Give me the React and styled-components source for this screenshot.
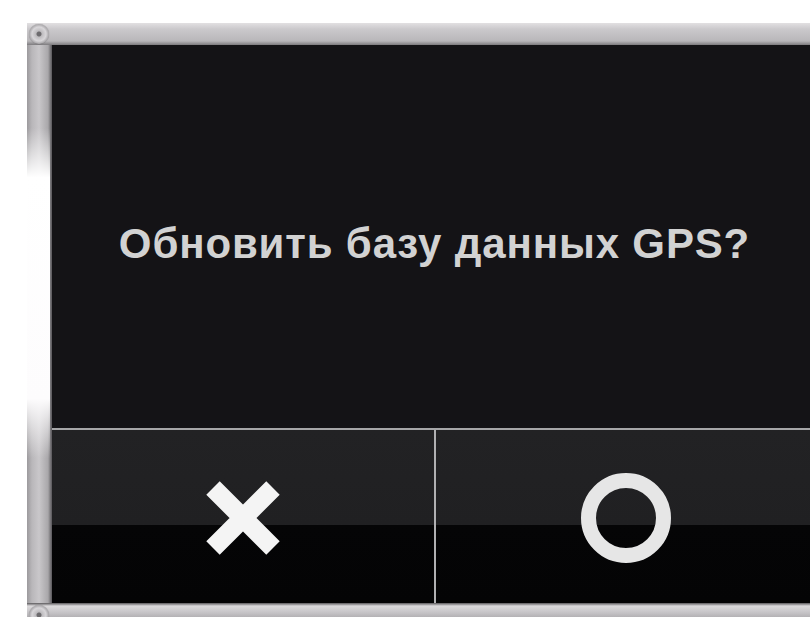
import React from 'react'
import styled, { createGlobalStyle } from 'styled-components'

const Global = createGlobalStyle`
  html, body {
    margin: 0;
    background: #fff;
    overflow: hidden;
  }
  body {
    font-family: "Liberation Sans", Arial, sans-serif;
  }
`

const Page = styled.div`
  width: 810px;
  height: 617px;
  padding: 23px 0 0 27px;
  box-sizing: border-box;
  overflow: hidden;
`

const Bezel = styled.div`
  position: relative;
  width: 765px;
  padding: 22px 0 14px 25px;
  background:
    linear-gradient(180deg, #e2e0e2 0px, #cbc9cc 6px, #b9b7ba 18px, #7d7b7e 22px, transparent 22px),
    linear-gradient(180deg, transparent 580px, #5a585b 580px, #dcdadc 583px, #c4c2c5 590px, #9a989b 600px),
    linear-gradient(90deg, #9c9a9d 0px, #b9b7ba 5px, #c9c7ca 12px, #a9a7aa 21px, #58565a 25px);
`

// bright reflection running down the middle of the left rail
const Shine = styled.div`
  position: absolute;
  left: 0;
  top: 105px;
  width: 23px;
  height: 330px;
  background: linear-gradient(180deg, rgba(255,255,255,0) 0%, #fff 15%, #fdfcfd 82%, rgba(255,255,255,0) 100%);
  pointer-events: none;
`

const Screw = styled.div`
  position: absolute;
  left: 2px;
  top: 1px;
  width: 20px;
  height: 20px;
  border-radius: 50%;
  background: radial-gradient(circle at 50% 50%, #6d6b6e 0 2px, #bdbbbe 3px, #d8d6d9 7px, #a4a2a5 10px);
  box-shadow: 0 0 1px rgba(0,0,0,0.4);
`

const BottomScrew = styled(Screw)`
  top: auto;
  bottom: -8px;
`

const Screen = styled.div`
  display: flex;
  flex-direction: column;
  background: #141316;
  height: 558px;
`

const Message = styled.div`
  flex: 1;
  display: flex;
  align-items: center;
  justify-content: center;
  padding-top: 14px;
  color: #d2d2d2;
  font-size: 42px;
  font-weight: bold;
  letter-spacing: 0.85px;
  white-space: nowrap;
`

const Buttons = styled.div`
  display: grid;
  grid-template-columns: 1fr 2px 1fr;
  height: 173px;
  border-top: 2px solid #a6a6a8;
`

const Divider = styled.div`
  background: #b0b0b2;
`

const Button = styled.div`
  display: flex;
  align-items: center;
  justify-content: center;
  background: linear-gradient(180deg, #222224 0, #202022 95px, #050506 95px, #040405 100%);
  padding-top: 2px;
`

function CrossIcon() {
  return (
    <svg width="82" height="82" viewBox="0 0 82 82">
      <path d="M11 11 L71 71 M71 11 L11 71" stroke="#f4f4f4" strokeWidth="19" fill="none" />
    </svg>
  )
}

function RingIcon() {
  return (
    <svg width="92" height="92" viewBox="0 0 92 92">
      <circle cx="46" cy="46" r="37.5" stroke="#e6e6e6" strokeWidth="15" fill="none" />
    </svg>
  )
}

export default function App() {
  return (
    <Page>
      <Global />
      <Bezel>
        <Shine />
        <Screw />
        <BottomScrew />
        <Screen>
          <Message>Обновить базу данных GPS?</Message>
          <Buttons>
            <Button><CrossIcon /></Button>
            <Divider />
            <Button><RingIcon /></Button>
          </Buttons>
        </Screen>
      </Bezel>
    </Page>
  )
}
